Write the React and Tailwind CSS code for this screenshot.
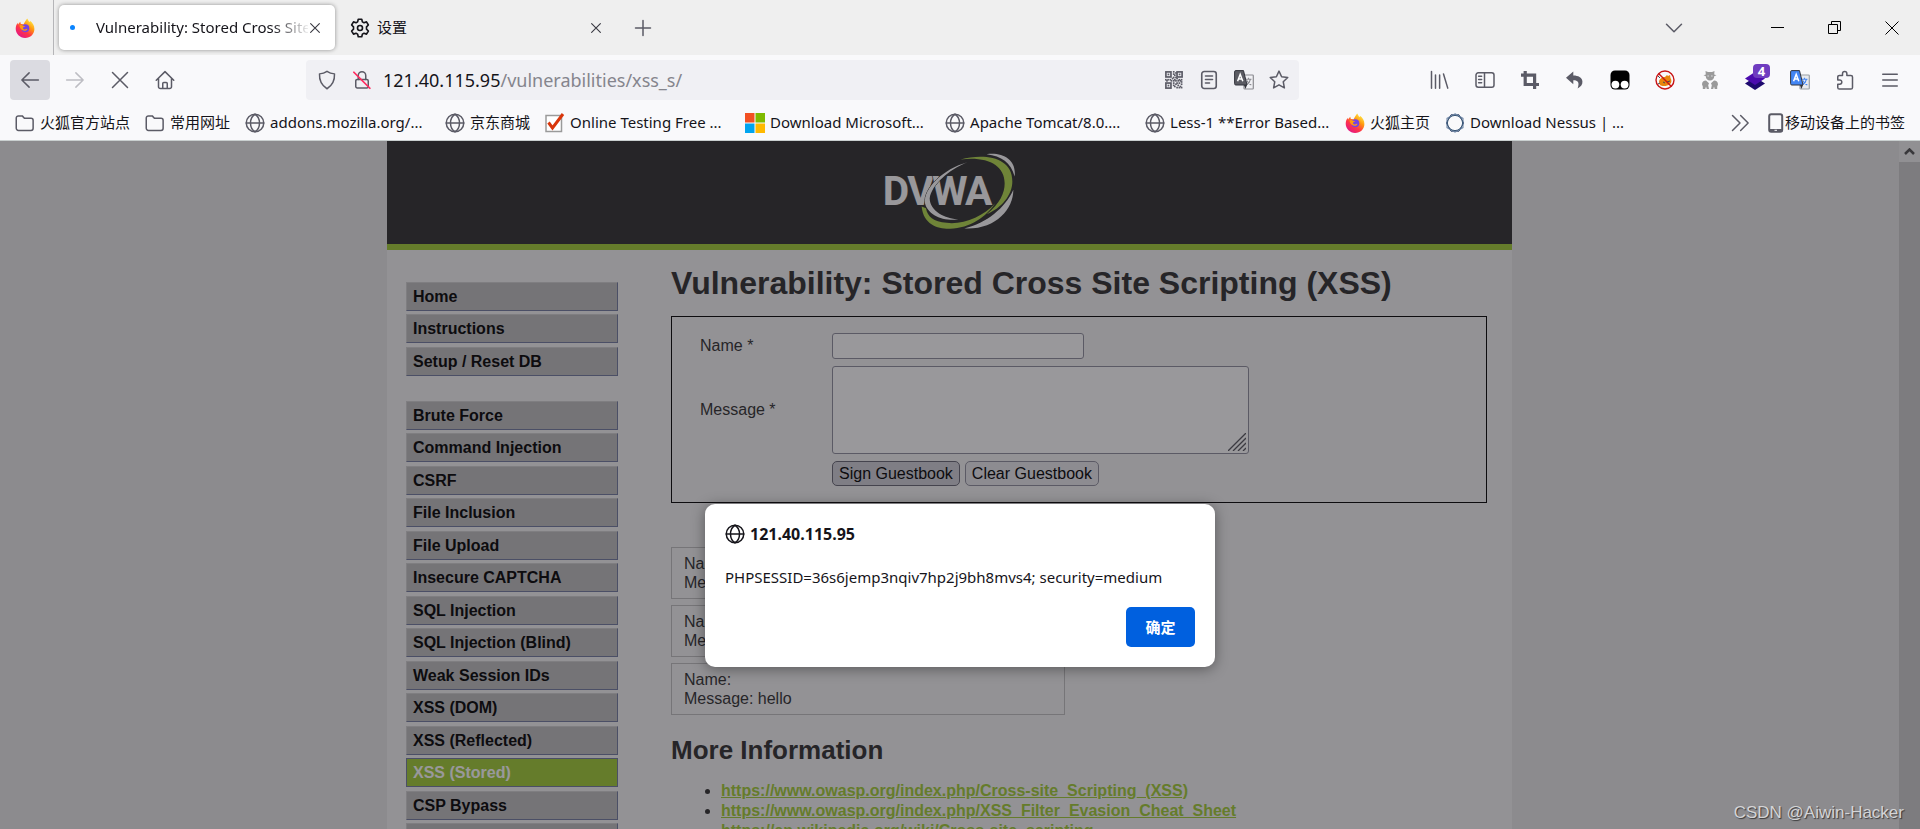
import React from 'react';

const uiFont = "font-['Noto_Sans','Noto_Sans_CJK_SC',sans-serif]";
const pageFont = "font-['Liberation_Sans',Arial,sans-serif]";

function Line({ children, size = 20, sw = 1.2, className = 'text-[#5b5b66]' }) {
  return (
    <svg
      width={size}
      height={size}
      viewBox="0 0 16 16"
      fill="none"
      stroke="currentColor"
      strokeWidth={sw}
      strokeLinecap="round"
      strokeLinejoin="round"
      aria-hidden="true"
      className={`shrink-0 ${className}`}
    >
      {children}
    </svg>
  );
}

const Globe = ({ className }) => (
  <Line className={className}>
    <circle cx="8" cy="8" r="7" />
    <path d="M1 8h14M8 1c-2.6 1.6-3.6 4-3.6 7s1 5.400 3.600 7M8 1c2.600 1.600 3.600 4 3.600 7s-1 5.400-3.600 7" />
  </Line>
);

const Folder = () => (
  <Line>
    <path d="M1 4a1.700 1.700 0 0 1 1.700-1.700h3.100l1.700 1.900h5.300A1.700 1.700 0 0 1 14.500 5.900v6.300a1.700 1.700 0 0 1-1.700 1.700H2.700A1.700 1.700 0 0 1 1 12.200z" />
  </Line>
);

const Firefox = ({ id }) => (
  <svg width="20" height="20" viewBox="0 0 20 20" aria-hidden="true" className="shrink-0">
    <defs>
      <linearGradient id={id} x1="0.85" y1="0.05" x2="0.2" y2="0.95">
        <stop offset="0" stopColor="#fff44f" />
        <stop offset="0.35" stopColor="#ff980e" />
        <stop offset="0.65" stopColor="#ff3647" />
        <stop offset="1" stopColor="#e31587" />
      </linearGradient>
    </defs>
    <path
      fill={`url(#${id})`}
      d="M12.200 0.400c1 1.400 1 2.400 2.400 3.600.5-.2.4-.8.3-1.200 2.700 1.700 4.500 4.600 4.500 8.100 0 5-4 9-9.300 9-5.200 0-9.400-4-9.400-9.100 0-2.600.9-4.700 2-6.100 0 .8.100 1.300.4 1.900.5-1.200 1.300-2.200 2.300-2.900-.1.900.100 1.700.6 2.400.9.100 1.800.100 2.500.3C9.600 4.300 10.600 2.500 12.200.4z"
    />
    <circle cx="10.300" cy="10.300" r="4" fill="#7542e5" />
    <path fill="#ff980e" d="M4.500 7.400c1.500-.9 2.900-.2 3.600.3.900.1 1.700.3 2.200.9-1.200.300-2.200.6-2.300 1.500-.1 1 1 1.500 2 1.300 1.100-.2 1.500-.8 2.500-.5-.7 1.700-2.600 2.200-4.200 1.600C5.900 11.600 4.700 9.500 4.500 7.400z" />
  </svg>
);

const Shield = () => (
  <Line>
    <path d="M8 1.100c1.800 1.300 3.900 1.900 6 2 .2 3.900-.8 8.600-6 11.900C2.800 11.700 1.800 7 2 3.100c2.100-.1 4.200-.7 6-2z" />
  </Line>
);

const LockSlash = () => (
  <Line>
    <rect x="3" y="7.500" width="10" height="6.800" rx="1.200" />
    <path d="M5 7.500V4.300a3 3 0 0 1 6 0v3.200" />
    <path d="M1.500 1.800l12.800 12.800" stroke="#ff2a5e" strokeWidth="1.400" />
  </Line>
);

const qrCells = [
  [7, 0], [9, 1], [7, 2], [8, 3], [7, 5], [9, 5], [0, 7], [2, 7], [4, 7], [6, 6], [8, 7], [10, 6], [12, 7], [14, 7],
  [1, 8], [5, 8], [7, 8], [9, 8], [11, 8], [13, 8], [7, 10], [10, 10], [12, 10], [14, 11], [9, 11], [11, 12], [13, 13],
  [8, 13], [10, 14], [12, 14], [14, 9], [14, 14], [7, 12],
];
const Qr = () => (
  <svg width="18" height="18" viewBox="0 0 16 16" aria-hidden="true" className="text-[#5b5b66]">
    <g fill="none" stroke="currentColor" strokeWidth="1.500">
      <rect x="0.800" y="0.800" width="4.500" height="4.500" />
      <rect x="10.700" y="0.800" width="4.500" height="4.500" />
      <rect x="0.800" y="10.700" width="4.500" height="4.500" />
    </g>
    <g fill="currentColor">
      <rect x="2.300" y="2.300" width="1.500" height="1.500" />
      <rect x="12.200" y="2.300" width="1.500" height="1.500" />
      <rect x="2.300" y="12.200" width="1.500" height="1.500" />
      {qrCells.map(([x, y]) => (
        <rect key={`${x}-${y}`} x={x} y={y} width="1.500" height="1.500" />
      ))}
    </g>
  </svg>
);

const Reader = () => (
  <Line sw={1.3}>
    <rect x="2.200" y="1.200" width="11.600" height="13.600" rx="2" />
    <path d="M5.200 4.800h5.600M5.200 7.600h5.600M5.200 10.400h3.200" />
  </Line>
);

const Translate = ({ front, back, glyph, page }) => (
  <svg width="20" height="20" viewBox="0 0 20 20" aria-hidden="true">
    <rect x="10" y="5" width="9.300" height="14" rx="0.800" fill={page} stroke={back} strokeWidth="1.200" />
    <path d="M11.500 9.200h6M14.500 7.800v1.400M16.500 9.200c-.5 2.500-2 4.500-4 5.600M12.800 10.500c1 2 2.500 3.500 4.500 4.500" fill="none" stroke={glyph} strokeWidth="1.100" />
    <path d="M1.800.6h7.700L13 15H1.800A1.300 1.300 0 0 1 .6 13.700V1.800A1.200 1.200 0 0 1 1.800.6z" fill={front} stroke="#33343c" strokeWidth="1" />
    <path d="M10 15h3l-1.500 4z" fill="#33343c" />
    <path d="M3.600 11.200L6.200 4.300l2.600 6.900M4.500 9h3.400" fill="none" stroke="#fff" strokeWidth="1.500" />
  </svg>
);

const Star = () => (
  <Line>
    <path d="M8 .9l2.100 4.500 4.900.6-3.600 3.400.9 4.900L8 11.900l-4.300 2.400.9-4.900L1 6l4.900-.6z" />
  </Line>
);

const Library = () => (
  <Line sw={1.2}>
    <path d="M1.200 1.200v13.300M4.400 4v10.500M7.700 4v10.500M10.800 3.200l3.400 11.300" />
  </Line>
);
const Sidebar = () => (
  <Line>
    <rect x="0.800" y="2.200" width="14.400" height="11.600" rx="1.800" />
    <path d="M7.600 2.200v11.600M2.900 5h2.400M2.900 7.600h2.400M2.900 10.200h2.400" />
  </Line>
);
const Crop = () => (
  <svg width="20" height="20" viewBox="0 0 20 20" aria-hidden="true">
    <path d="M5.200 1v13.500H19M1 5.200h13.600V19" fill="none" stroke="#5b5b66" strokeWidth="3.200" />
  </svg>
);
const Undo = () => (
  <svg width="20" height="20" viewBox="0 0 20 20" aria-hidden="true">
    <path fill="#5b5b66" d="M8.300 1.500L1 7.800l7.300 6.400v-4c4.200-.1 6.700 1.700 4.300 8.300 3.200-1.800 5.200-4.200 4.800-7.300-.5-3.700-4-5.500-9.100-5.600z" />
  </svg>
);
const Tamper = () => (
  <svg width="20" height="20" viewBox="0 0 20 20" aria-hidden="true">
    <rect x="0.500" y="0.500" width="19" height="19" rx="4.500" fill="#000" />
    <circle cx="5.400" cy="14.600" r="3.900" fill="#fff" />
    <circle cx="14.600" cy="14.600" r="3.900" fill="#fff" />
  </svg>
);
const NoFox = () => (
  <svg width="20" height="20" viewBox="0 0 20 20" aria-hidden="true">
    <path fill="#e8850c" d="M4 12c0-3 3-5 6-5l2-2 1 1 2-1 .5 3c1.500 2 1 5-.5 6-3 2.500-8 2.500-10 1z" />
    <path d="M3 6l2 2M3 14l2-1M8 12l2 1M12 12l3-1" stroke="#3f4a55" strokeWidth="1" />
    <circle cx="10" cy="10" r="9" fill="none" stroke="#c81414" strokeWidth="1.400" />
    <path d="M3.600 3.600l12.800 12.800" stroke="#c81414" strokeWidth="1.400" />
  </svg>
);
const Spy = () => (
  <svg width="18" height="20" viewBox="0 0 18 20" aria-hidden="true">
    <path fill="#9a9a9a" d="M4.500 1l2.500 1h4l2.500-1-.3 3.500 2.300.8-2.300.9c0 2.500-1.700 4.300-4.200 4.300S4.800 8.700 4.800 6.200l-2.300-.9 2.300-.8z" />
    <path fill="#9a9a9a" d="M1 14.500c0-2.500 1.500-3.700 4-3.900l3 2.700-.8 2 .8 3.700H5.800L5 16.500 4.200 19H1.800V16.500zM17 14.500c0-2.500-1.500-3.700-4-3.900l-3 2.700.8 2L10 19h2.200l.8-2.500.8 2.500h2.400V16.500z" />
    <path d="M6.300 6h1.700M10 6h1.700" stroke="#d8d8dc" strokeWidth="1" />
  </svg>
);
const Layers = () => (
  <span className="relative block h-5 w-5">
    <svg width="20" height="20" viewBox="0 0 20 20" aria-hidden="true">
      <path fill="#1d0a6e" d="M0 13.500L10 7l10 6.500L10 20z" />
      <path fill="#4b0cae" d="M0 8.500L10 2l10 6.500L10 15z" />
    </svg>
    <span className="absolute -top-[6px] left-[8px] flex h-[14px] w-[17px] items-center justify-center rounded-sm bg-[#6f3cc0] text-[13px] leading-none font-bold text-white">
      4
    </span>
  </span>
);
const Puzzle = () => (
  <Line>
    <path d="M6 4.300V3a1.700 1.700 0 0 1 3.500 0v1.300h3.200a1.300 1.300 0 0 1 1.300 1.300v8.300a1.300 1.300 0 0 1-1.300 1.300H3.500a1.300 1.300 0 0 1-1.300-1.300v-2.500h1.500a1.700 1.700 0 0 0 0-3.500H2.200V5.600a1.300 1.300 0 0 1 1.300-1.300z" />
  </Line>
);
const Menu = () => (
  <Line>
    <path d="M2.200 3.300h11.600M2.200 8h11.600M2.200 12.700h11.600" />
  </Line>
);
const CheckBoxIcon = () => (
  <svg width="20" height="20" viewBox="0 0 20 20" aria-hidden="true" className="shrink-0">
    <rect x="1" y="2.500" width="15.500" height="16" fill="#fff" stroke="#9a9a9a" strokeWidth="1.500" />
    <path d="M3.500 9.500l4 5.500L18 1" fill="none" stroke="#d9360b" strokeWidth="3" />
  </svg>
);
const Microsoft = () => (
  <svg width="20" height="20" viewBox="0 0 20 20" aria-hidden="true" className="shrink-0">
    <path fill="#f25022" d="M0 0h9.500v9.500H0z" />
    <path fill="#7fba00" d="M10.500 0H20v9.500h-9.500z" />
    <path fill="#00a4ef" d="M0 10.500h9.500V20H0z" />
    <path fill="#ffb900" d="M10.500 10.500H20V20h-9.500z" />
  </svg>
);
const Nessus = () => (
  <svg width="20" height="20" viewBox="0 0 20 20" aria-hidden="true" className="shrink-0" fill="none">
    <path d="M6 1.800h8l4.700 8.200-4.700 8.200H6L1.300 10z" stroke="#2c3e63" strokeWidth="1" />
    <path d="M10 .8l8 4.600v9.200l-8 4.600-8-4.600V5.400z" stroke="#7189a8" strokeWidth="1.100" />
    <circle cx="10" cy="10" r="7.600" stroke="#3b5877" strokeWidth="1" />
  </svg>
);
const Phone = () => (
  <svg width="16" height="20" viewBox="0 0 16 20" aria-hidden="true" className="shrink-0">
    <rect x="1.200" y="1.200" width="13" height="17.600" rx="2" fill="none" stroke="#5b5b66" strokeWidth="2" />
    <path d="M1 16h13.500v2.500H1z" fill="#5b5b66" />
    <path d="M6.500 17.300h2.500" stroke="#fff" strokeWidth="1" />
  </svg>
);

const Logo = () => (
  <svg width="132" height="77" viewBox="42 25 396 230" role="img" aria-label="DVWA">
    <g fill="#fff">
      <path d="M350 28C400 22 440 45 434 95C422 52 395 34 350 28z" />
      <path d="M430 135C430 195 375 256 283 251C350 235 405 190 430 135z" />
    </g>
    <g fill="#b3da4c">
      <path d="M272 44C340 25 428 35 427 110C427 150 395 190 350 208C390 175 404 145 404 115C404 60 350 34 272 44z" />
      <path d="M155 185C160 240 205 253 240 252C300 250 350 215 375 176C340 215 280 240 230 234C190 230 172 215 168 190z" />
    </g>
    <text
      y="182"
      x="38 112 186 285"
      className="fill-white stroke-[#2f2f2f] font-[Roboto,sans-serif] text-[122px] font-bold [paint-order:stroke]"
      strokeWidth="4"
    >
      DVWA
    </text>
    <path
      fill="#fff"
      stroke="#2f2f2f"
      strokeWidth="3"
      className="[paint-order:stroke]"
      d="M292 52C220 72 160 130 165 175C172 207 215 230 265 224C225 220 180 200 179 160C185 120 235 75 292 52z"
    />
  </svg>
);

function IconButton({ label, children, className = '' }) {
  return (
    <button type="button" aria-label={label} className={`flex h-10 w-10 shrink-0 items-center justify-center rounded ${className}`}>
      {children}
    </button>
  );
}

function TabBar() {
  return (
    <div className="flex h-[55px] bg-[#efefef]">
      <button type="button" aria-label="Firefox" className="flex w-[54px] shrink-0 items-center justify-center border-r border-[#b5b5b8] pr-[3px]">
        <Firefox id="ff-tab" />
      </button>
      <div role="tablist" className="flex py-[5px] pl-[5px]">
        <div role="tab" aria-selected="true" className="flex w-[276px] items-center rounded-[5px] bg-white pr-[13px] pl-[10px] shadow-[0_0_4px_rgba(0,0,0,0.4)]">
          <span className="ml-[1px] h-[5px] w-[5px] rounded-full bg-[#0a84ff]" />
          <span className="ml-[21px] flex-1 overflow-hidden text-[15px] whitespace-nowrap text-[#15141a] [mask-image:linear-gradient(to_right,black_175px,transparent_215px)]">
            Vulnerability: Stored Cross Site
          </span>
          <button type="button" aria-label="Close tab">
            <Line size={14} sw={1.3} className="text-[#3a3a42]">
              <path d="M3 3l10 10M13 3L3 13" />
            </Line>
          </button>
        </div>
        <div role="tab" aria-selected="false" className="ml-[5px] flex w-[276px] items-center pr-[13px] pl-[10px]">
          <Line className="text-[#15141a]" sw={1.3}>
            <circle cx="8" cy="8" r="2" />
            <path d="M6.600 1h2.800l.5 2.100 1.300.7 2-.7 1.500 2.500-1.500 1.500v1.800l1.500 1.500-1.500 2.500-2-.7-1.300.7-.5 2.100H6.600l-.5-2.100-1.300-.7-2 .7-1.500-2.500 1.500-1.500V7.100L1.300 5.600l1.500-2.500 2 .7 1.300-.7z" />
          </Line>
          <span className="ml-[7px] flex-1 text-[15px] text-[#15141a]">设置</span>
          <button type="button" aria-label="Close tab">
            <Line size={14} sw={1.3} className="text-[#3a3a42]">
              <path d="M3 3l10 10M13 3L3 13" />
            </Line>
          </button>
        </div>
        <IconButton label="New tab" className="ml-[7px] self-center">
          <Line>
            <path d="M8 2v12M2 8h12" />
          </Line>
        </IconButton>
      </div>
      <div className="ml-auto flex shrink-0">
        <IconButton label="List all tabs" className="mr-[55px] self-center">
          <Line>
            <path d="M2 5l6 6 6-6" />
          </Line>
        </IconButton>
        <button type="button" aria-label="Minimize" className="flex w-[57px] items-center justify-center">
          <svg width="13" height="13" aria-hidden="true"><path d="M0 6.500h13" stroke="#000" /></svg>
        </button>
        <button type="button" aria-label="Restore" className="flex w-[57px] items-center justify-center">
          <svg width="13" height="13" fill="none" stroke="#000" aria-hidden="true"><path d="M.5 3.500h9v9h-9zM3.500 3.500v-3h9v9h-3" /></svg>
        </button>
        <button type="button" aria-label="Close" className="flex w-[57px] items-center justify-center">
          <svg width="14" height="14" stroke="#000" aria-hidden="true"><path d="M.5.5l13 13M13.500.5l-13 13" /></svg>
        </button>
      </div>
    </div>
  );
}

const extensions = [
  ['Library', <Library />],
  ['Sidebars', <Sidebar />],
  ['Screenshot', <Crop />],
  ['Undo close tab', <Undo />],
  ['Tampermonkey', <Tamper />],
  ['FoxyProxy', <NoFox />],
  ['User agent', <Spy />],
  ['Wappalyzer', <Layers />],
  ['Translate', <Translate front="#4285f4" back="#9aa0a6" glyph="#4285f4" page="#e8eaed" />],
  ['Extensions', <Puzzle />],
  ['Menu', <Menu />],
];

function NavBar() {
  return (
    <div className="flex items-center px-[10px] py-[5px]">
      <div className="flex gap-[5px]">
        <IconButton label="Back" className="bg-[#dbdbe1]">
          <Line><path d="M14.700 8H1.500M7.300 2.300L1.500 8l5.800 5.700" /></Line>
        </IconButton>
        <IconButton label="Forward">
          <Line className="text-[#bdbdc3]"><path d="M1.300 8h13.200M8.700 2.300L14.500 8l-5.800 5.700" /></Line>
        </IconButton>
        <IconButton label="Stop">
          <Line><path d="M2 2l12 12M14 2L2 14" /></Line>
        </IconButton>
        <IconButton label="Home">
          <Line>
            <path d="M1 8.200L8 1.300l7 6.900M2.800 6.700v6.600a1.500 1.500 0 0 0 1.500 1.500h7.400a1.500 1.500 0 0 0 1.500-1.500V6.700M6.200 14.700v-3.900a.8.8 0 0 1 .8-.8h2a.8.8 0 0 1 .8.8v3.900" />
          </Line>
        </IconButton>
      </div>
      <div className="w-[121px]" />
      <div className="flex h-10 min-w-0 flex-1 items-center rounded bg-[#f0f0f4] px-[3px]">
        <span className="flex w-[35px] justify-center"><Shield /></span>
        <span className="flex w-[35px] justify-center"><LockSlash /></span>
        <div className="flex-1 pl-1 text-[18px] whitespace-nowrap text-[#15141a]">
          121.40.115.95<span className="text-[#85858d]">/vulnerabilities/xss_s/</span>
        </div>
        <button type="button" aria-label="QR code" className="flex w-[35px] justify-center"><Qr /></button>
        <button type="button" aria-label="Reader view" className="flex w-[35px] justify-center"><Reader /></button>
        <button type="button" aria-label="Translate page" className="flex w-[35px] justify-center">
          <Translate front="#5b5b63" back="#8a8a90" glyph="#8a8a90" page="#f0f0f4" />
        </button>
        <button type="button" aria-label="Bookmark page" className="flex w-[35px] justify-center"><Star /></button>
      </div>
      <div className="w-[121px]" />
      <div className="flex gap-[5px]">
        {extensions.map(([label, icon]) => (
          <IconButton key={label} label={label}>{icon}</IconButton>
        ))}
      </div>
    </div>
  );
}

const bookmarks = [
  [<Folder />, '火狐官方站点', false],
  [<Folder />, '常用网址', false],
  [<Globe />, 'addons.mozilla.org/...', true],
  [<Globe />, '京东商城', false],
  [<CheckBoxIcon />, 'Online Testing Free ...', true],
  [<Microsoft />, 'Download Microsoft...', true],
  [<Globe />, 'Apache Tomcat/8.0....', true],
  [<Globe />, 'Less-1 **Error Based...', true],
  [<Firefox id="ff-mark" />, '火狐主页', false],
  [<Nessus />, 'Download Nessus | ...', true],
];

function BookmarkBar() {
  return (
    <nav aria-label="Bookmarks" className="flex h-9 items-center gap-[15px] border-b border-[#c9cfcf] px-[15px] text-[15px] whitespace-nowrap text-[#15141a]">
      {bookmarks.map(([icon, label, wide]) => (
        <a key={label} href="#bookmark" className={`flex shrink-0 items-center gap-[5px] ${wide ? 'w-[185px]' : ''}`}>
          {icon}
          {label}
        </a>
      ))}
      <button type="button" aria-label="More bookmarks" className="mr-[3px] ml-auto">
        <Line><path d="M2 2l6 6-6 6M8.500 2l6 6-6 6" /></Line>
      </button>
      <a href="#mobile" className="flex items-center gap-[1px]">
        <Phone />
        移动设备上的书签
      </a>
    </nav>
  );
}

const menuGroups = [
  ['Home', 'Instructions', 'Setup / Reset DB'],
  [
    'Brute Force',
    'Command Injection',
    'CSRF',
    'File Inclusion',
    'File Upload',
    'Insecure CAPTCHA',
    'SQL Injection',
    'SQL Injection (Blind)',
    'Weak Session IDs',
    'XSS (DOM)',
    'XSS (Reflected)',
    'XSS (Stored)',
    'CSP Bypass',
    'JavaScript',
  ],
];

function SideMenu() {
  return (
    <nav aria-label="DVWA" className="flex w-[212px] shrink-0 flex-col gap-[22px] pt-8 font-bold">
      {menuGroups.map((group) => (
        <ul key={group[0]}>
          {group.map((item) => (
            <li
              key={item}
              className={`h-[29px] border odd:mb-[3px] even:mb-1 ${
                item === 'XSS (Stored)'
                  ? 'border-[#717b9e] bg-[#a1cc33] text-white'
                  : 'border-t-[#cfcfcf] border-r-[#717b9e] border-b-[#717b9e] border-l-[#cfcfcf] bg-[#bebebe] text-black'
              }`}
            >
              <a href="#menu" className="block px-[6px] leading-[27px]">{item}</a>
            </li>
          ))}
        </ul>
      ))}
    </nav>
  );
}

const messages = ['', '', 'hello'];
const links = [
  'https://www.owasp.org/index.php/Cross-site_Scripting_(XSS)',
  'https://www.owasp.org/index.php/XSS_Filter_Evasion_Cheat_Sheet',
  'https://en.wikipedia.org/wiki/Cross-site_scripting',
];

function MainContent() {
  return (
    <main className="ml-[53px] min-w-0 flex-1 pt-[14px] pr-[25px]">
      <h1 className="text-[32px] leading-[38px] font-bold">Vulnerability: Stored Cross Site Scripting (XSS)</h1>
      <form className="mt-[14px] grid grid-cols-[132px_1fr] items-center gap-y-[7px] border border-black py-4 pl-7">
        <label htmlFor="name">Name *</label>
        <input id="name" type="text" className="h-[26px] w-[252px] rounded-[3px] border border-[#8f8f9d] bg-white px-1" />
        <label htmlFor="message">Message *</label>
        <div className="relative h-[88px] w-[417px]">
          <textarea id="message" className="block h-full w-full resize-none rounded-[3px] border border-[#8f8f9d] bg-white px-1" />
          <svg width="18" height="18" className="absolute right-[3px] bottom-[3px]" stroke="#55555c" strokeWidth="1.300" aria-hidden="true">
            <path d="M0 18L18 0M5 18L18 5M10 18l8-8M15 18l3-3" />
          </svg>
        </div>
        <div className="col-start-2 flex gap-[5px]">
          <button type="button" className="h-[25px] rounded-[5px] border border-[#676774] bg-[#d0d0d7] px-[6px] leading-[23px] text-black">Sign Guestbook</button>
          <button type="button" className="h-[25px] rounded-[5px] border border-[#8f8f9d] bg-[#e9e9ed] px-[6px] leading-[23px] text-black">Clear Guestbook</button>
        </div>
      </form>
      <div className="mt-11 flex w-[394px] flex-col gap-[6px]">
        {messages.map((message, i) => (
          <div key={i} className="border border-[#c0c0c0] py-[6px] pl-3 leading-[19px]">
            <p>Name:</p>
            <p>Message: {message}</p>
          </div>
        ))}
      </div>
      <h2 className="mt-[19px] text-[26px] leading-8 font-bold">More Information</h2>
      <ul className="mt-[15px] list-disc pl-[50px] leading-5">
        {links.map((url) => (
          <li key={url}>
            <a href={url} className="font-bold text-[#a1cc33] underline">{url}</a>
          </li>
        ))}
      </ul>
    </main>
  );
}

function AlertDialog() {
  return (
    <div
      role="alertdialog"
      aria-label="121.40.115.95"
      className={`absolute top-[363px] left-1/2 w-[510px] -translate-x-1/2 rounded-[10px] bg-white px-5 pt-[19px] pb-5 text-[#15141a] shadow-[0_2px_14px_rgba(0,0,0,0.4)] ${uiFont}`}
    >
      <div className="flex items-center gap-[5px] text-[16px] leading-[22px] font-bold">
        <Globe className="text-[#15141a]" />
        121.40.115.95
      </div>
      <p className="mt-[21px] text-[15px] leading-[22px]">PHPSESSID=36s6jemp3nqiv7hp2j9bh8mvs4; security=medium</p>
      <div className="mt-[19px] flex justify-end">
        <button type="button" className="h-10 w-[69px] rounded-[5px] bg-[#0060df] text-[15px] font-bold text-white">确定</button>
      </div>
    </div>
  );
}

export default function App() {
  return (
    <div className={`flex h-screen flex-col overflow-hidden bg-[#f9f9fb] ${uiFont}`}>
      <header>
        <TabBar />
        <NavBar />
        <BookmarkBar />
      </header>
      <div className="relative flex min-h-0 flex-1 overflow-hidden">
        <div className={`min-w-0 flex-1 overflow-hidden bg-[#e7e7e7] text-[16px] text-[#2f2f2f] ${pageFont}`}>
          <div className="mx-auto w-[1125px] max-w-full bg-[#f4f4f4]">
            <div className="flex h-[109px] items-center justify-center border-b-[6px] border-[#a1cc33] bg-[#2f2f2f] pb-[2px]">
              <Logo />
            </div>
            <div className="flex pl-[19px]">
              <SideMenu />
              <MainContent />
            </div>
          </div>
        </div>
        <div className="w-[21px] shrink-0 bg-[#cdcdcd]" aria-hidden="true">
          <div className="flex h-[21px] items-center justify-center bg-[#f0f0f0]">
            <svg width="11" height="7" fill="none" stroke="#505050" strokeWidth="2.500"><path d="M1 6l4.500-4.500L10 6" /></svg>
          </div>
        </div>
        <div className="absolute inset-0 bg-[rgb(28,27,34)]/45" />
        <AlertDialog />
        <div className={`absolute right-4 bottom-1 text-[17px] text-[#d4d4d6] [text-shadow:1px_1px_1px_rgba(0,0,0,0.6)] ${pageFont}`}>
          CSDN @Aiwin-Hacker
        </div>
      </div>
    </div>
  );
}
